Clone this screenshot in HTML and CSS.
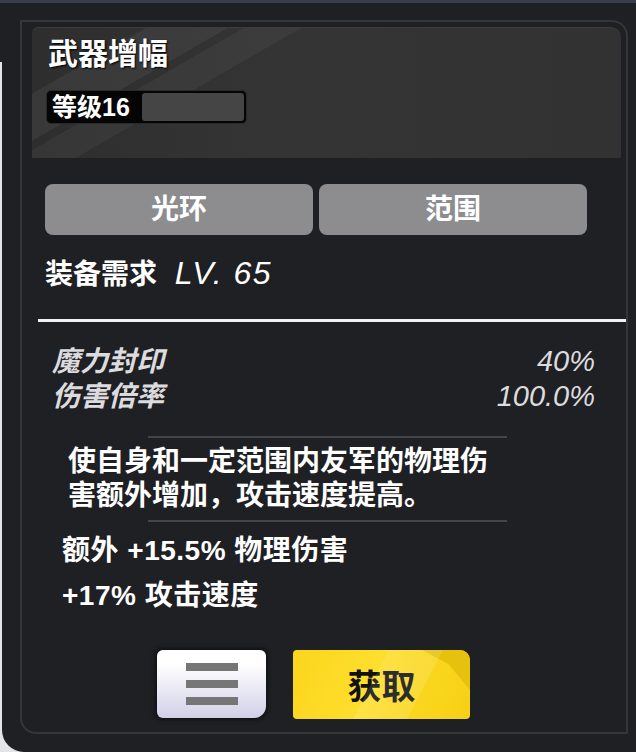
FILE: index.html
```html
<!DOCTYPE html>
<html lang="zh-CN">
  <head>
    <meta charset="UTF-8" />
    <meta name="viewport" content="width=device-width, initial-scale=1.0" />
    <title>武器增幅</title>
    <link rel="stylesheet" href="styles.css">
  </head>
  <body>
    <div class="panel">
      <div class="frame">
        <div class="header">
          <h1 class="title">武器增幅</h1>
          <div class="level">
            <span class="level-label">等级16</span>
            <span class="level-fill"></span>
          </div>
        </div>

        <div class="tabs">
          <button class="tab">光环</button>
          <button class="tab">范围</button>
        </div>

        <p class="require">装备需求 <span class="lv">LV. 65</span></p>

        <hr class="rule" />

        <dl class="stats">
          <div class="stat"><dt>魔力封印</dt><dd>40%</dd></div>
          <div class="stat"><dt>伤害倍率</dt><dd>100.0%</dd></div>
        </dl>

        <hr class="sep" />
        <p class="desc">使自身和一定范围内友军的物理伤害额外增加，攻击速度提高。</p>
        <hr class="sep" />

        <ul class="effects">
          <li>额外 +15.5% 物理伤害</li>
          <li>+17% 攻击速度</li>
        </ul>

        <div class="actions">
          <button class="menu-btn" aria-label="菜单">
            <span class="bar"></span>
            <span class="bar"></span>
            <span class="bar"></span>
          </button>
          <button class="get-btn">获取</button>
        </div>
      </div>
    </div>
  </body>
</html>
```

FILE: styles.css
```css
:root {
  font-family: "Liberation Sans", "Noto Sans CJK SC", sans-serif;
}

*,
*::before,
*::after {
  box-sizing: border-box;
}

body {
  margin: 0;
  width: 636px;
  height: 752px;
  overflow: hidden;
  background: linear-gradient(to bottom, #3a3d4a 0 3px, #1f2024 3px 62px, #e4e4e6 62px);
}

.panel {
  margin: 3px 0 0 2px;
  height: 749px;
  padding-top: 17px;
  background-color: #1f2024;
  border-radius: 0 10px 0 22px;
  color: #fff;
}

.frame {
  margin: 0 8px 0 18px;
  height: 714px;
  border: 2px solid #34363c;
  border-radius: 0 16px 0 16px;
}

/* header card */
.header {
  margin: 5px 5px 0 10px;
  height: 131px;
  padding: 9px 0 0 14px;
  border-top: 1px solid #3c3c3c;
  border-radius: 6px 10px 0 0;
  background:
    linear-gradient(150deg, transparent 0 14%, rgba(255, 255, 255, 0.05) 14% 24%, transparent 24% 26%, rgba(255, 255, 255, 0.04) 26% 33%, transparent 33%),
    linear-gradient(to right, #2e2e2e, #343434 40%, #323232);
}

.title {
  margin: 0 0 0 2px;
  font-size: 30px;
  line-height: 34px;
  font-weight: 700;
  text-shadow: 1px 1px 2px #000;
}

.level {
  display: flex;
  width: 201px;
  height: 34px;
  margin-top: 19px;
  border: 1px solid #2a2a2a;
  border-radius: 5px;
  background-color: #050505;
}

.level-label {
  width: 95px;
  padding-left: 5px;
  font-size: 25px;
  line-height: 32px;
  font-weight: 700;
}

.level-fill {
  flex: 1;
  margin: 2px 2px 2px 0;
  border-radius: 3px;
  background-color: #454545;
}

/* tabs */
.tabs {
  display: flex;
  gap: 6px;
  margin: 26px 0 0 23px;
}

.tab {
  width: 268px;
  height: 51px;
  padding: 0;
  border: 0;
  border-radius: 8px;
  background-color: #8d8d8f;
  color: #fff;
  font-family: inherit;
  font-size: 28px;
  line-height: 51px;
  font-weight: 700;
}

.require {
  margin: 22px 0 0 23px;
  font-size: 28px;
  line-height: 36px;
  font-weight: 700;
}

.lv {
  margin-left: 10px;
  font-size: 32px;
  line-height: 28px;
  font-style: italic;
  font-weight: 400;
  letter-spacing: 1.5px;
}

.rule {
  margin: 26px 0 0 16px;
  height: 3px;
  border: 0;
  background-color: #f2f2f2;
}

/* stats */
.stats {
  margin: 22px 31px 0 30px;
  color: #dcdcde;
  font-size: 28px;
  line-height: 35px;
  font-style: italic;
}

.stat {
  display: flex;
  justify-content: space-between;
}

.stat dt {
  font-weight: 700;
}

.stat dd {
  margin: 0;
  font-size: 29px;
  line-height: 35px;
}

.sep {
  margin: 22px 0 0 126px;
  width: 359px;
  height: 2px;
  border: 0;
  background-color: #44454a;
}

.desc {
  margin: 7px 0 7px 46px;
  width: 428px;
  font-size: 28px;
  line-height: 34px;
  font-weight: 700;
}

.desc + .sep {
  margin-top: 0;
}

.effects {
  list-style: none;
  margin: 6px 0 0 40px;
  padding: 0;
  font-size: 28px;
  line-height: 45px;
  font-weight: 700;
  letter-spacing: 0.5px;
}

/* bottom buttons */
.actions {
  display: flex;
  gap: 27px;
  margin: 32px 0 0 135px;
}

.menu-btn {
  display: flex;
  flex-direction: column;
  align-items: center;
  justify-content: center;
  gap: 9px;
  width: 109px;
  height: 68px;
  padding: 0;
  border: 0;
  border-radius: 6px 6px 12px 6px;
  background: linear-gradient(to bottom, #ffffff 20%, #d2d0e8);
  box-shadow: 0 0 4px 2px #111114;
}

.bar {
  width: 52px;
  height: 8px;
  background-color: #767676;
}

.get-btn {
  position: relative;
  overflow: hidden;
  width: 177px;
  height: 69px;
  padding: 0;
  border: 0;
  border-radius: 4px 10px 4px 4px;
  background: linear-gradient(110deg, #fbd51c 0%, #fedf2e 45%, #fbd921 60%, #f6d016 100%);
  color: #111;
  font-family: inherit;
  font-size: 34px;
  font-weight: 700;
}

.get-btn::before {
  content: "";
  position: absolute;
  top: 0;
  right: 0;
  width: 48px;
  height: 40px;
  background-color: #e6c20f;
  clip-path: polygon(0 0, 100% 0, 100% 100%, 55% 35%);
}

.get-btn::after {
  content: "";
  position: absolute;
  top: 0;
  left: 60px;
  width: 90px;
  height: 69px;
  background-color: rgba(255, 255, 255, 0.12);
  clip-path: polygon(40% 0, 100% 0, 60% 100%, 0 100%);
}
```
